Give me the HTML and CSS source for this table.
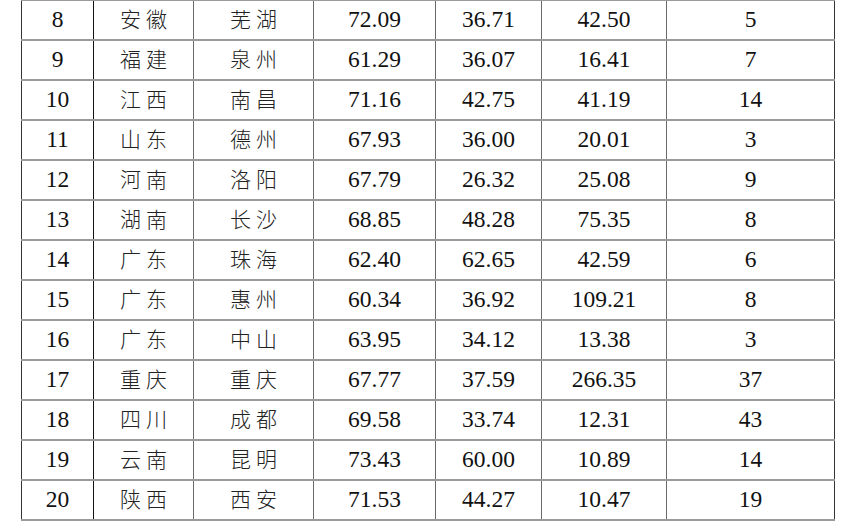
FILE: index.html
```html
<!DOCTYPE html>
<html lang="en">
<head>
<meta charset="utf-8">
<title>城市数据表</title>
<link rel="stylesheet" href="styles.css">
</head>
<body>
<table class="data">
  <colgroup>
    <col class="c-no"><col class="c-prov"><col class="c-city"><col class="c-a"><col class="c-b"><col class="c-c"><col class="c-d">
  </colgroup>
  <tbody>
    <tr><td>8</td><td class="zh">安徽</td><td class="zh">芜湖</td><td>72.09</td><td>36.71</td><td>42.50</td><td>5</td></tr>
    <tr><td>9</td><td class="zh">福建</td><td class="zh">泉州</td><td>61.29</td><td>36.07</td><td>16.41</td><td>7</td></tr>
    <tr><td>10</td><td class="zh">江西</td><td class="zh">南昌</td><td>71.16</td><td>42.75</td><td>41.19</td><td>14</td></tr>
    <tr><td>11</td><td class="zh">山东</td><td class="zh">德州</td><td>67.93</td><td>36.00</td><td>20.01</td><td>3</td></tr>
    <tr><td>12</td><td class="zh">河南</td><td class="zh">洛阳</td><td>67.79</td><td>26.32</td><td>25.08</td><td>9</td></tr>
    <tr><td>13</td><td class="zh">湖南</td><td class="zh">长沙</td><td>68.85</td><td>48.28</td><td>75.35</td><td>8</td></tr>
    <tr><td>14</td><td class="zh">广东</td><td class="zh">珠海</td><td>62.40</td><td>62.65</td><td>42.59</td><td>6</td></tr>
    <tr><td>15</td><td class="zh">广东</td><td class="zh">惠州</td><td>60.34</td><td>36.92</td><td>109.21</td><td>8</td></tr>
    <tr><td>16</td><td class="zh">广东</td><td class="zh">中山</td><td>63.95</td><td>34.12</td><td>13.38</td><td>3</td></tr>
    <tr><td>17</td><td class="zh">重庆</td><td class="zh">重庆</td><td>67.77</td><td>37.59</td><td>266.35</td><td>37</td></tr>
    <tr><td>18</td><td class="zh">四川</td><td class="zh">成都</td><td>69.58</td><td>33.74</td><td>12.31</td><td>43</td></tr>
    <tr><td>19</td><td class="zh">云南</td><td class="zh">昆明</td><td>73.43</td><td>60.00</td><td>10.89</td><td>14</td></tr>
    <tr><td>20</td><td class="zh">陕西</td><td class="zh">西安</td><td>71.53</td><td>44.27</td><td>10.47</td><td>19</td></tr>
  </tbody>
</table>
</body>
</html>
```
FILE: styles.css
```css
html, body {
  margin: 0;
  padding: 0;
  background: #ffffff;
}

.data {
  margin-left: 21px;
  margin-top: -1px;
  border-collapse: collapse;
  table-layout: fixed;
  width: 814px;
  font-family: "Liberation Serif", "Times New Roman", serif;
  font-size: 23.5px;
  color: #111;
}

.c-no { width: 72px; }
.c-prov { width: 100px; }
.c-city { width: 120px; }
.c-a { width: 122px; }
.c-b { width: 106px; }
.c-c { width: 125px; }
.c-d { width: 168px; }

.data td {
  height: 38px;
  padding: 0;
  text-align: center;
  vertical-align: middle;
  border-top: 2px solid #9a9a9a;
  border-bottom: 2px solid #9a9a9a;
  border-left: 1px solid #6a6a6a;
  border-right: 1px solid #6a6a6a;
  line-height: 1;
}

.data td:first-child {
  border-left-color: #333;
  border-right-color: #111;
}

.data td:last-child {
  border-right-color: #333;
}

.data td.zh {
  height: 35px;
  font-family: "Noto Sans CJK SC", "Noto Sans CJK JP", sans-serif;
  font-weight: 300;
  font-size: 21px;
  letter-spacing: 5px;
  padding-left: 5px;
  padding-bottom: 3px;
  color: #222;
}
```
